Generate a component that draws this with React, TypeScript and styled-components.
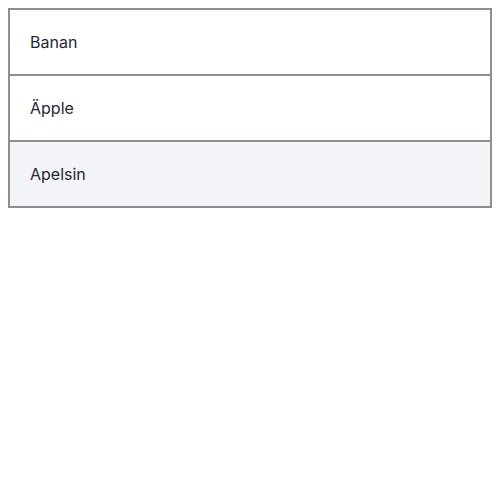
import styled, { createGlobalStyle } from 'styled-components';

const GlobalStyle = createGlobalStyle`
  body {
    margin: 8px;
    font-family: Inter, "Noto Sans", sans-serif;
    background: #fff;
  }
`;

const List = styled.ul`
  list-style: none;
  margin: 0;
  padding: 0;
  border: 2px solid #8e8e90;
  display: flex;
  flex-direction: column;
`;

const Item = styled.li<{ $active?: boolean }>`
  height: 64px;
  display: flex;
  align-items: center;
  padding: 0 20px;
  font-size: 16px;
  color: #1f2933;
  background-color: ${(p) => (p.$active ? '#f3f4f8' : '#fff')};
  & + & {
    border-top: 2px solid #8e8e90;
  }
`;

const fruits = ['Banan', 'Äpple', 'Apelsin'];

export default function App() {
  return (
    <>
      <GlobalStyle />
      <List>
        {fruits.map((f, i) => (
          <Item key={f} $active={i === 2}>
            {f}
          </Item>
        ))}
      </List>
    </>
  );
}
